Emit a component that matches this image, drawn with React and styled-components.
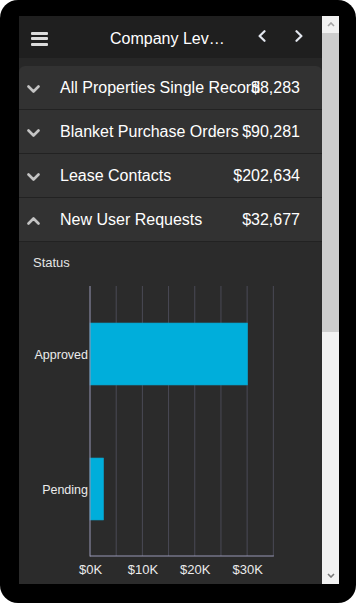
import React from 'react';
import styled, { createGlobalStyle } from 'styled-components';

const Global = createGlobalStyle`
  html, body { margin: 0; padding: 0; background: #ffffff; }
  body { font-family: "Liberation Sans", Arial, sans-serif; }
`;

const Frame = styled.div`
  width: 356px;
  height: 603px;
  box-sizing: border-box;
  background: #000;
  border-radius: 18px;
  padding: 16px 17px 19px 19px;
  display: flex;
`;

const Screen = styled.div`
  flex: 1;
  display: flex;
  min-width: 0;
`;

const Content = styled.div`
  flex: 1;
  min-width: 0;
  display: flex;
  flex-direction: column;
  background: #272727;
  overflow: hidden;
`;

const Header = styled.header`
  height: 42px;
  flex-shrink: 0;
  background: #1f1f1f;
  display: flex;
  align-items: center;
  padding: 0 19px 0 12px;
  color: #fff;
`;

const Burger = styled.div`
  width: 17px;
  display: flex;
  flex-direction: column;
  gap: 2.5px;
  margin-top: 3px;
`;

const BurgerBar = styled.span`
  display: block;
  height: 3px;
  background: #dcdcdc;
  border-radius: 1px;
`;

const Title = styled.div`
  margin-left: 62px;
  width: 117px;
  font-size: 16px;
  line-height: 20px;
  margin-top: 3px;
  white-space: nowrap;
  overflow: hidden;
  text-overflow: ellipsis;
`;

const Nav = styled.div`
  margin-left: auto;
  display: flex;
  align-items: center;
  gap: 29px;
  margin-top: -2px;
`;

const NavIcon = styled.svg`
  display: block;
  width: 8px;
  height: 12px;
`;

const List = styled.div`
  flex: 1;
  display: flex;
  flex-direction: column;
  padding-top: 8px;
  min-height: 0;
`;

const Row = styled.div`
  height: 43px;
  flex-shrink: 0;
  display: flex;
  align-items: center;
  padding: 1px 22px 0 8px;
  box-sizing: border-box;
  background: #323232;
  border-bottom: 1px solid #222;
  border-radius: ${p => (p.$first ? '6px 6px 0 0' : '0')};
  color: #fff;
  font-size: 16px;
  height: 44px;
`;

const Chevron = styled.svg`
  width: 13px;
  height: 8px;
  flex-shrink: 0;
  margin-right: 20px;
  margin-top: 1px;
`;

const Label = styled.span`
  flex: 1;
  min-width: 0;
  white-space: nowrap;
  overflow: visible;
`;

const Value = styled.span`
  flex-shrink: 0;
  margin-left: 4px;
  white-space: nowrap;
`;

const Panel = styled.div`
  flex: 1;
  background: #2b2b2b;
  display: flex;
  flex-direction: column;
`;

const PanelTitle = styled.div`
  padding: 13px 14px 0;
  font-size: 13px;
  line-height: 15px;
  color: #e4e4e4;
`;

const Chart = styled.svg`
  display: block;
  width: 303px;
  height: 313px;
  margin-top: 1px;
  flex-shrink: 0;
  font-family: "Liberation Sans", Arial, sans-serif;
`;

const Scrollbar = styled.div`
  width: 17px;
  flex-shrink: 0;
  display: flex;
  flex-direction: column;
  background: #f1f1f1;
`;

const ScrollButton = styled.div`
  height: 17px;
  flex-shrink: 0;
  display: flex;
  align-items: center;
  justify-content: center;
`;

const Thumb = styled.div`
  height: 299px;
  flex-shrink: 0;
  background: #cdcdcd;
`;

const Track = styled.div`
  flex: 1;
`;

const rows = [
  { label: 'All Properties Single Record', value: '$8,283' },
  { label: 'Blanket Purchase Orders', value: '$90,281' },
  { label: 'Lease Contacts', value: '$202,634' },
  { label: 'New User Requests', value: '$32,677', open: true },
];

const RowChevron = ({ up }) => (
  <Chevron viewBox="0 0 13 8">
    <polyline
      points={up ? '1.5,6.5 6.5,1.5 11.5,6.5' : '1.5,1.5 6.5,6.5 11.5,1.5'}
      fill="none"
      stroke="#c4c4c4"
      strokeWidth="2.6"
      strokeLinecap="round"
      strokeLinejoin="round"
    />
  </Chevron>
);

const X0 = 71;
const STEP = 26.19; // px per $5K
const PX_PER_K = STEP / 5;

const data = [
  { name: 'Approved', value: 30.1, y: 52 },
  { name: 'Pending', value: 2.6, y: 187 },
];

const StatusChart = () => {
  const grid = [1, 2, 3, 4, 5, 6, 7].map(k => X0 + k * STEP);
  return (
    <Chart viewBox="0 0 303 313">
      {grid.map(x => (
        <line key={x} x1={x} x2={x} y1={15} y2={285} stroke="#4a4a56" strokeWidth="1" />
      ))}
      {data.map(d => (
        <g key={d.name}>
          <rect
            x={X0}
            y={d.y}
            width={d.value * PX_PER_K}
            height={62}
            fill="#00aedb"
            stroke="#0a9cc4"
            strokeWidth="0.6"
          />
          <text
            x={69}
            y={d.y + 32}
            textAnchor="end"
            dominantBaseline="central"
            fontSize="12.5"
            fill="#ececec"
          >
            {d.name}
          </text>
        </g>
      ))}
      <line x1={X0} x2={X0} y1={15} y2={285.5} stroke="#9898b6" strokeWidth="1" />
      <line x1={X0} x2={X0 + 7 * STEP + 0.5} y1={285} y2={285} stroke="#9898b6" strokeWidth="1" />
      {[0, 10, 20, 30].map(k => (
        <text
          key={k}
          x={X0 + k * PX_PER_K + 0.5}
          y={298.5}
          textAnchor="middle"
          dominantBaseline="central"
          fontSize="13"
          fill="#ececec"
        >
          {`$${k}K`}
        </text>
      ))}
    </Chart>
  );
};

export default function App() {
  return (
    <>
      <Global />
      <Frame>
        <Screen>
          <Content>
            <Header>
              <Burger>
                <BurgerBar />
                <BurgerBar />
                <BurgerBar />
              </Burger>
              <Title>Company Level Summary</Title>
              <Nav>
                <NavIcon viewBox="0 0 8 12">
                  <polyline points="6.5,1.2 1.6,6 6.5,10.8" fill="none" stroke="#e2e6ee" strokeWidth="2.2" strokeLinecap="round" strokeLinejoin="round" />
                </NavIcon>
                <NavIcon viewBox="0 0 8 12">
                  <polyline points="1.5,1.2 6.4,6 1.5,10.8" fill="none" stroke="#e2e6ee" strokeWidth="2.2" strokeLinecap="round" strokeLinejoin="round" />
                </NavIcon>
              </Nav>
            </Header>
            <List>
              {rows.map((r, i) => (
                <Row key={r.label} $first={i === 0}>
                  <RowChevron up={r.open} />
                  <Label>{r.label}</Label>
                  <Value>{r.value}</Value>
                </Row>
              ))}
              <Panel>
                <PanelTitle>Status</PanelTitle>
                <StatusChart />
              </Panel>
            </List>
          </Content>
          <Scrollbar>
            <ScrollButton>
              <svg width="8" height="5" viewBox="0 0 8 5">
                <polyline points="1,4 4,1 7,4" fill="none" stroke="#a3a3a3" strokeWidth="1.6" />
              </svg>
            </ScrollButton>
            <Thumb />
            <Track />
            <ScrollButton>
              <svg width="8" height="5" viewBox="0 0 8 5">
                <polyline points="1,1 4,4 7,1" fill="none" stroke="#787878" strokeWidth="1.6" />
              </svg>
            </ScrollButton>
          </Scrollbar>
        </Screen>
      </Frame>
    </>
  );
}
